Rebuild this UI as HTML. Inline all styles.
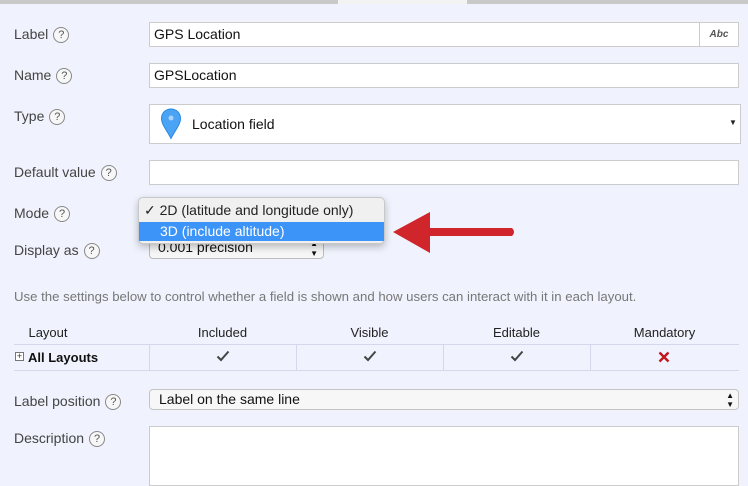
<!DOCTYPE html>
<html><head><meta charset="utf-8"><style>
*{box-sizing:border-box;margin:0;padding:0}
body{width:748px;height:477px;overflow:hidden;background:#f0f3fd;font-family:"Liberation Sans",Arial,sans-serif;font-size:14px;color:#333;position:relative}
.a{position:absolute}
.lbl{position:absolute;left:14px;font-size:14px;color:#444;white-space:nowrap}
.q{display:inline-block;width:16px;height:16px;border:1px solid #888;border-radius:50%;font-size:11px;line-height:14px;text-align:center;color:#555;vertical-align:1px;margin-left:5px;background:#f7f7f7}
.inp{position:absolute;background:#fff;border:1px solid #ccc;font-size:14px;color:#111;padding-left:4px}
.th{position:absolute;top:325px;font-size:13px;color:#222;text-align:center}
.ck{position:absolute;top:347px;text-align:center}
</style></head><body>
<div class="a" style="left:0;top:0;width:338px;height:4px;background:#c9c9c9"></div>
<div class="a" style="left:338px;top:0;width:129px;height:4px;background:#f3f3f3"></div>
<div class="a" style="left:467px;top:0;width:281px;height:4px;background:#c9c9c9"></div>

<div class="lbl" style="top:26px">Label<span class="q">?</span></div>
<div class="inp" style="left:149px;top:22px;width:590px;height:25px;line-height:23px">GPS Location</div>
<div class="a" style="left:699px;top:22px;width:40px;height:25px;border:1px solid #ccc;background:#fff;font-size:10px;font-style:italic;font-weight:bold;color:#555;text-align:center;line-height:23px">Abc</div>

<div class="lbl" style="top:67px">Name<span class="q">?</span></div>
<div class="inp" style="left:149px;top:63px;width:590px;height:25px;line-height:23px">GPSLocation</div>

<div class="lbl" style="top:108px">Type<span class="q">?</span></div>
<div class="inp" style="left:149px;top:104px;width:592px;height:40px;line-height:38px;padding-left:42px">Location field</div>
<svg class="a" style="left:160px;top:108px" width="22" height="32" viewBox="0 0 22 32"><path d="M11 1C5.5 1 1.5 5 1.5 10.5c0 6 5.5 12 9.5 20 4-8 9.5-14 9.5-20C20.5 5 16.5 1 11 1z" fill="#4aa3f5" stroke="#2b88dd" stroke-width="1"/><circle cx="11" cy="10" r="2.5" fill="#a9d3fb"/></svg>
<div class="a" style="left:729px;top:118px;font-size:8px;color:#222">▼</div>

<div class="lbl" style="top:164px">Default value<span class="q">?</span></div>
<div class="inp" style="left:149px;top:160px;width:590px;height:25px"></div>

<div class="lbl" style="top:205px">Mode<span class="q">?</span></div>
<div class="lbl" style="top:242px">Display as<span class="q">?</span></div>
<div class="a" style="left:149px;top:236px;width:175px;height:23px;border:1px solid #bbb;border-radius:4px;background:#f7f7f7;padding-left:8px;line-height:21px;font-size:14px;color:#111">0.001 precision<span style="position:absolute;right:5px;top:2px;font-size:8px;line-height:10px">▲<br>▼</span></div>

<div class="a" style="left:138px;top:197px;width:247px;height:47px;background:#f0f0f0;border:1px solid #c8c8c8;border-radius:5px;box-shadow:0 3px 8px rgba(0,0,0,.25)">
<div style="position:absolute;left:5px;top:4px;font-size:14px;color:#222">✓ 2D (latitude and longitude only)</div>
<div style="position:absolute;left:0;top:24px;width:245px;height:19px;background:#3d94f8;color:#fff;padding-left:21px;line-height:19px;font-size:14px">3D (include altitude)</div>
</div>
<svg class="a" style="left:390px;top:210px" width="130" height="46" viewBox="0 0 130 46"><path d="M3 22 L40 2 L40 18 L122 18 Q126 22 122 26 L40 26 L40 43 Z" fill="#d0262b"/></svg>

<div class="a" style="left:14px;top:289px;font-size:13.2px;color:#777;white-space:nowrap">Use the settings below to control whether a field is shown and how users can interact with it in each layout.</div>

<div class="th" style="left:14px;width:68px">Layout</div>
<div class="th" style="left:149px;width:147px">Included</div>
<div class="th" style="left:296px;width:147px">Visible</div>
<div class="th" style="left:443px;width:147px">Editable</div>
<div class="th" style="left:590px;width:149px">Mandatory</div>
<div class="a" style="left:14px;top:344px;width:725px;height:1px;background:#d4d8ea"></div>
<div class="a" style="left:14px;top:370px;width:725px;height:1px;background:#d4d8ea"></div>
<div class="a" style="left:149px;top:345px;width:1px;height:25px;background:#d4d8ea"></div>
<div class="a" style="left:296px;top:345px;width:1px;height:25px;background:#d4d8ea"></div>
<div class="a" style="left:443px;top:345px;width:1px;height:25px;background:#d4d8ea"></div>
<div class="a" style="left:590px;top:345px;width:1px;height:25px;background:#d4d8ea"></div>
<div class="a" style="left:15px;top:352px;width:9px;height:9px;border:1px solid #777;background:#fff;font-size:9px;line-height:7px;text-align:center">+</div>
<div class="a" style="left:28px;top:350px;font-size:13px;font-weight:bold;color:#111">All Layouts</div>
<svg class="ck" style="left:216px;top:350px" width="14" height="12" viewBox="0 0 14 12"><path d="M1.5 6.5 L5 10 L12.5 1.5" fill="none" stroke="#444" stroke-width="2"/></svg>
<svg class="ck" style="left:363px;top:350px" width="14" height="12" viewBox="0 0 14 12"><path d="M1.5 6.5 L5 10 L12.5 1.5" fill="none" stroke="#444" stroke-width="2"/></svg>
<svg class="ck" style="left:510px;top:350px" width="14" height="12" viewBox="0 0 14 12"><path d="M1.5 6.5 L5 10 L12.5 1.5" fill="none" stroke="#444" stroke-width="2"/></svg>
<svg class="ck" style="left:658px;top:351px" width="12" height="12" viewBox="0 0 12 12"><path d="M1.5 1.5 L10.5 10.5 M10.5 1.5 L1.5 10.5" fill="none" stroke="#c0181e" stroke-width="2.4"/></svg>

<div class="lbl" style="top:393px">Label position<span class="q">?</span></div>
<div class="a" style="left:149px;top:389px;width:590px;height:21px;border:1px solid #c4c4c4;border-radius:4px;background:#f7f7f7;padding-left:9px;line-height:19px;font-size:14px;color:#111">Label on the same line<span style="position:absolute;right:4px;top:1px;font-size:8px;line-height:9px">▲<br>▼</span></div>

<div class="lbl" style="top:430px">Description<span class="q">?</span></div>
<div class="inp" style="left:149px;top:426px;width:590px;height:60px"></div>
</body></html>
